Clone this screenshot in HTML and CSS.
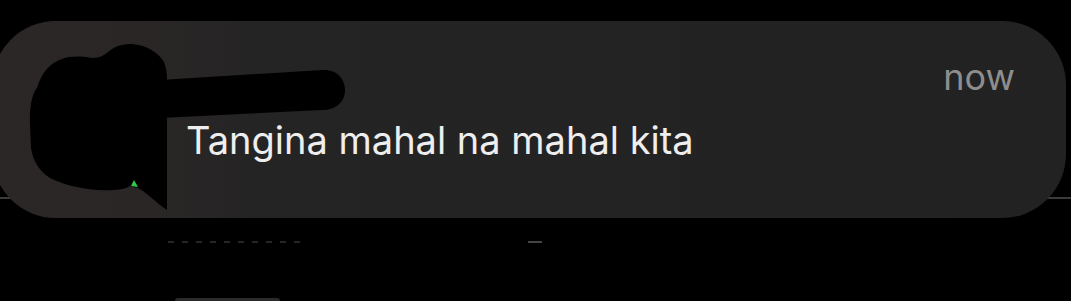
FILE: index.html
```html
<!DOCTYPE html>
<html lang="en">
<head>
    <meta charset="UTF-8">
    <meta name="viewport" content="width=device-width, initial-scale=1.0">
    <title>Notification</title>
    <link rel="stylesheet" href="styles.css">
</head>
<body>

<div class="screen">
    <div class="card">
        <div class="avatar-col"></div>
        <div class="content">
            <div class="meta">
                <span class="time">now</span>
            </div>
            <div class="message">Tangina mahal na mahal kita</div>
        </div>
    </div>

    <!-- scribble that hides the sender -->
    <svg class="redact" width="360" height="230" viewBox="0 0 360 230">
        <path d="M30,125 C29,105 33,92 37,88 C42,72 50,63 62,59 C70,56 80,56 92,58 C100,58 104,55 108,52 C115,46 122,44 132,44 C146,45 158,52 164,62 C167,70 167,76 167,80 L167,210 L160,205 C152,198 145,192 138,188 L130,186 C124,190 112,191 98,190 C80,189 62,184 50,178 C38,170 33,160 31,148 Z" fill="#000"/>
        <path d="M160,80 L322,70 C336,69 345,78 345,90 C345,102 336,110 322,110 L160,118 Z" fill="#000"/>
        <path d="M131,186 L134,180 L138,187 Z" fill="#2fc84a"/>
    </svg>

    <div class="below">
        <div class="ghost-text"></div>
        <div class="ghost-dot"></div>
    </div>
    <div class="pill"></div>
</div>

</body>
</html>
```

FILE: styles.css
```css
html, body {
    margin: 0;
    height: 100%;
    overflow: hidden;
    background-color: #000;
}
.screen {
    position: relative;
    height: 301px;
    overflow: hidden;
    font-family: Inter, "Noto Sans", sans-serif;
    /* thin row divider that peeks out behind the card corners */
    background: linear-gradient(to bottom, transparent 197px, #3b3b3b 197px, #3b3b3b 199px, transparent 199px), #000;
    padding-top: 21px;
    box-sizing: border-box;
}
.card {
    display: flex;
    width: 1074px;
    height: 197px;
    margin-left: -8px;
    border-radius: 64px;
    background: linear-gradient(90deg, #2c2727 0, #2a2626 150px, #252424 260px, #232323 600px, #222222 100%);
}
.avatar-col {
    width: 194px;
    flex-shrink: 0;
}
.content {
    flex: 1;
    padding-right: 51px;
}
.meta {
    margin-top: 33px;
    height: 46px;
    line-height: 46px;
    text-align: right;
}
.time {
    font-size: 36px;
    color: #8e8e8e;
}
.message {
    margin-top: 17px;
    font-size: 38px;
    line-height: 46px;
    color: #eeeeee;
    white-space: nowrap;
}
.redact {
    position: absolute;
    left: 0;
    top: 0;
}
.below {
    display: flex;
    margin-top: 23px;
    height: 3px;
}
.ghost-text {
    margin-left: 168px;
    width: 137px;
    height: 2px;
    background: repeating-linear-gradient(90deg, #6a6a6a 0 6px, transparent 6px 14px);
    opacity: 0.35;
}
.ghost-dot {
    margin-left: 223px;
    width: 14px;
    height: 2px;
    background-color: #444;
}
.pill {
    margin: 54px 0 0 175px;
    width: 105px;
    height: 3px;
    border-radius: 10px 10px 0 0;
    background-color: #2a2a2a;
}
```
